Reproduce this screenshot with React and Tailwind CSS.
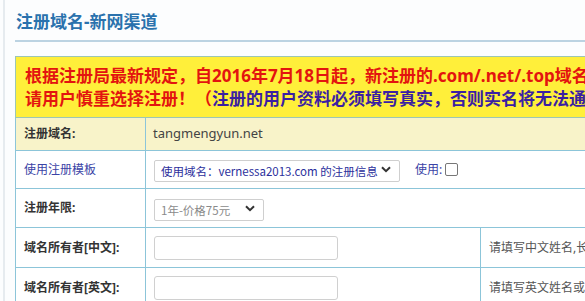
import React from "react";

const font = { fontFamily: '"Noto Sans", "Noto Sans CJK SC", sans-serif' };
const cjk = { fontFamily: '"Noto Sans CJK SC", sans-serif' };

function Chevron() {
  return (
    <svg width="10" height="7" viewBox="0 0 10 7" className="pointer-events-none absolute right-[9px] top-[8px]">
      <path d="M1 1.2 L5 5.2 L9 1.2" fill="none" stroke="#333" strokeWidth="2" />
    </svg>
  );
}

function Select({ width, disabled, children }) {
  return (
    <div className="relative inline-block align-middle" style={{ width }}>
      <select
        disabled={disabled}
        className={
          "h-[22px] w-full appearance-none rounded-[2px] border border-[#cfcfcf] bg-white pl-[6px] pr-[20px] text-[11.5px] leading-[20px] " +
          (disabled ? "text-[#8a8a8a]" : "text-[#2b2f9c]")
        }
        style={cjk}
      >
        <option>{children}</option>
      </select>
      <Chevron />
    </div>
  );
}

export default function App() {
  const cell = "border border-[#8cc5d9] align-middle";
  return (
    <div className="h-[301px] w-[585px] overflow-hidden bg-[#fcfdfe]" style={font}>
      <div className="ml-[3px] h-full border-l-2 border-[#e6ebef] pl-[10px]">
        <h1 className="pl-[1px] pt-[10px] text-[17px] font-bold leading-[24px] text-[#2a72ad]">
          注册域名-新网渠道
        </h1>
        <div className="mt-[6px] h-[2px] bg-[#bcd3e2]" />

        <table className="mt-[14px] w-[720px] table-fixed border-collapse">
          <colgroup>
            <col className="w-[130px]" />
            <col className="w-[335px]" />
            <col className="w-[255px]" />
          </colgroup>
          <tbody>
            <tr className="h-[61px]">
              <td colSpan={3} className="overflow-hidden whitespace-nowrap border border-[#9cc6b4] bg-[#ffef3a] px-[9px] text-[17px] font-bold leading-[23px] text-[#e3140f]">
                <div>根据注册局最新规定，自2016年7月18日起，新注册的.com/.net/.top域名</div>
                <div>
                  请用户慎重选择注册！（<span className="text-[#3b1fa3]">注册的用户资料必须填写真实，否则实名将无法通过</span>
                </div>
              </td>
            </tr>
            <tr className="h-[33px] bg-[#f8f3c9]">
              <td className={cell + " px-[8px] text-[12px] font-bold text-[#333]"}>注册域名:</td>
              <td colSpan={2} className={cell + " px-[7px] text-[13px] text-[#444]"}>tangmengyun.net</td>
            </tr>
            <tr className="h-[38px] bg-white">
              <td className={cell + " px-[8px] text-[12px] text-[#3a43a6]"}>使用注册模板</td>
              <td colSpan={2} className={cell + " px-[8px]"}>
                <div className="flex items-center">
                  <Select width="246px">使用域名：vernessa2013.com 的注册信息</Select>
                  <span className="ml-[15px] text-[12px] text-[#3a43a6]">使用:</span>
                  <span className="ml-[3px] inline-block h-[13px] w-[13px] rounded-[2px] border border-[#777] bg-white" />
                </div>
              </td>
            </tr>
            <tr className="h-[39px] bg-white">
              <td className={cell + " px-[8px] text-[12px] font-bold text-[#333]"}>注册年限:</td>
              <td colSpan={2} className={cell + " px-[8px]"}>
                <Select width="110px" disabled>1年-价格75元</Select>
              </td>
            </tr>
            <tr className="h-[40px] bg-white">
              <td className={cell + " px-[8px] text-[12px] font-bold text-[#333]"}>域名所有者[中文]:</td>
              <td className={cell + " px-[8px]"}>
                <input className="block h-[24px] w-[184px] rounded-[3px] border border-[#d0d0d0] bg-white" />
              </td>
              <td className={cell + " whitespace-nowrap px-[8px] text-[12px] text-[#555]"}>请填写中文姓名,长度不能超过10个汉字</td>
            </tr>
            <tr className="h-[40px] bg-white">
              <td className={cell + " px-[8px] text-[12px] font-bold text-[#333]"}>域名所有者[英文]:</td>
              <td className={cell + " px-[8px]"}>
                <input className="block h-[24px] w-[184px] rounded-[3px] border border-[#d0d0d0] bg-white" />
              </td>
              <td className={cell + " whitespace-nowrap px-[8px] text-[12px] text-[#555]"}>请填写英文姓名或者拼音</td>
            </tr>
          </tbody>
        </table>
      </div>
    </div>
  );
}
